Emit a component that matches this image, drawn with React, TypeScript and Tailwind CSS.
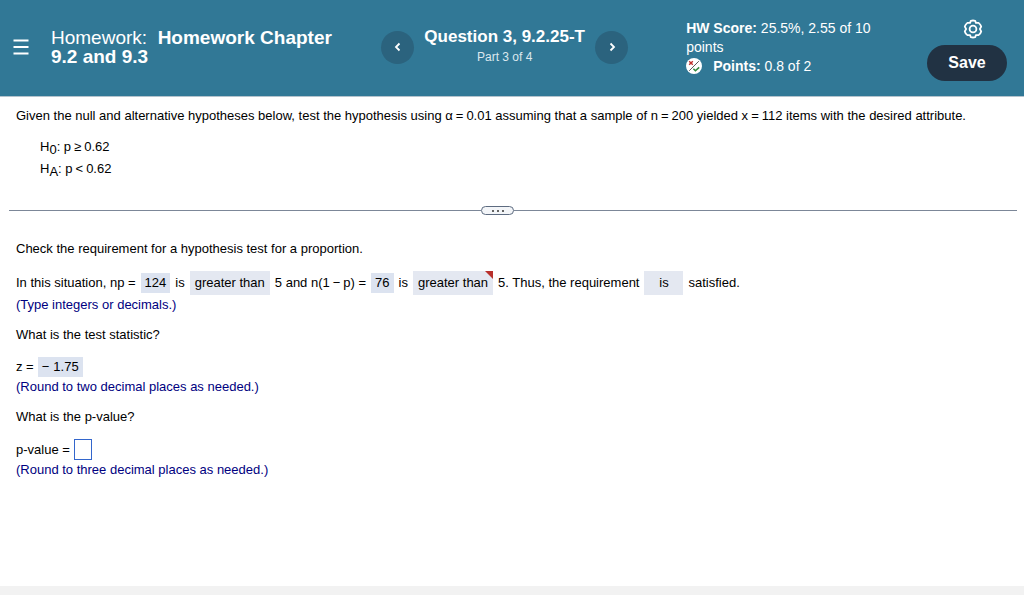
import React, { useState } from "react";

interface AnswerProps {
  children: React.ReactNode;
  flagged?: boolean;
}

// submitted numeric answer
function NumberAnswer({ children }: AnswerProps) {
  return (
    <span className="flex h-5 items-center bg-[#dce3f0] px-1">{children}</span>
  );
}

// submitted drop-down answer, flagged when it was marked wrong
function ChoiceAnswer({ children, flagged = false }: AnswerProps) {
  return (
    <span className="relative flex h-6 min-w-[39px] items-center justify-center bg-[#e4e8f1] px-[5px]">
      {children}
      {flagged && (
        <svg className="absolute top-0 right-0 h-2 w-2" viewBox="0 0 8 8" aria-hidden="true">
          <path d="M0 0H8V8Z" fill="#b8302c" />
        </svg>
      )}
    </span>
  );
}

function Op({ children }: { children: React.ReactNode }) {
  return <span className="mx-[3px]">{children}</span>;
}

function Sub({ children }: { children: React.ReactNode }) {
  return <sub className="text-[13px]">{children}</sub>;
}

function Hint({ children }: { children: React.ReactNode }) {
  return <p className="text-[#000080]">{children}</p>;
}

function PartialIcon() {
  return (
    <svg className="h-4 w-4" viewBox="0 0 16 16" fill="none" aria-hidden="true">
      <circle cx="8" cy="8" r="8" fill="#fff" />
      <path d="M3.2 3.2L6.8 6.8M6.8 3.2L3.2 6.8" stroke="#c0302c" strokeWidth="1.4" />
      <path d="M12.8 3.2L3.2 12.8" stroke="#444" strokeWidth="0.9" />
      <path d="M7.4 10.8L9.4 12.8L13.2 9.4" stroke="#2f8a3c" strokeWidth="1.5" />
    </svg>
  );
}

function GearIcon() {
  return (
    <svg className="h-5 w-5" viewBox="0 0 20 20" fill="none" stroke="#fff" strokeWidth="1.8" strokeLinejoin="round" aria-hidden="true">
      <path d="M7.8 1.8Q10 1.2 12.2 1.8L12.9 3.9L15.6 3.9Q17.6 5.4 18.2 7.6L16.9 10L18.2 12.4Q17.6 14.6 15.6 16.1L12.9 16.1L12.2 18.2Q10 18.8 7.8 18.2L7.1 16.1L4.4 16.1Q2.4 14.6 1.8 12.4L3.1 10L1.8 7.6Q2.4 5.4 4.4 3.9L7.1 3.9Z" />
      <circle cx="10" cy="10" r="3.4" />
    </svg>
  );
}

function Chevron({ d }: { d: string }) {
  return (
    <svg className="h-3 w-3" viewBox="0 0 12 12" fill="none" stroke="#fff" strokeWidth="1.8" aria-hidden="true">
      <path d={d} />
    </svg>
  );
}

function Header() {
  return (
    <header className="flex h-[97px] items-center border-b border-[#b4c3cd] bg-[#317896] pr-[17px] pb-0.5 text-white">
      <button type="button" aria-label="Menu" className="w-[51px] shrink-0 pl-[13px]">
        <svg className="h-4 w-4" viewBox="0 0 16 16" stroke="#fff" strokeWidth="1.8" aria-hidden="true">
          <path d="M0.5 1.5H15.5M0.5 8H15.5M0.5 14.5H15.5" />
        </svg>
      </button>

      <h1 className="flex-[11] pr-8 text-[19px] leading-[19px]">
        Homework:&nbsp; <strong>Homework Chapter 9.2 and 9.3</strong>
      </h1>

      <nav aria-label="Questions" className="flex w-[247px] shrink-0 items-center justify-between">
        <button type="button" aria-label="Previous question" className="flex h-[33px] w-[33px] items-center justify-center rounded-full bg-[#2b637e]">
          <Chevron d="M7.5 2.5L4 6L7.5 9.5" />
        </button>
        <div className="text-center">
          <h2 className="text-[17px] leading-5 font-bold whitespace-nowrap">Question 3, 9.2.25-T</h2>
          <p className="text-xs leading-5 text-[#dce8ee]">Part 3 of 4</p>
        </div>
        <button type="button" aria-label="Next question" className="flex h-[33px] w-[33px] items-center justify-center rounded-full bg-[#2b637e]">
          <Chevron d="M4.5 2.5L8 6L4.5 9.5" />
        </button>
      </nav>

      <div className="ml-[58px] flex-[8] pr-6 text-sm leading-[19px]">
        <p>
          <strong>HW Score:</strong> 25.5%, 2.55 of 10 points
        </p>
        <p className="flex items-center gap-[11px]">
          <PartialIcon />
          <span>
            <strong>Points:</strong> 0.8 of 2
          </span>
        </p>
      </div>

      <div className="flex w-20 shrink-0 flex-col items-center gap-1.5 pt-[5px]">
        <button type="button" aria-label="Settings" className="ml-3">
          <GearIcon />
        </button>
        <button type="button" className="h-9 w-full rounded-full bg-[#213243] text-base font-bold">
          Save
        </button>
      </div>
    </header>
  );
}

export default function App() {
  const [pValue, setPValue] = useState("");

  return (
    <div className="flex min-h-screen flex-col bg-white font-['Liberation_Sans',Arial,sans-serif] text-[13px] leading-5 text-black">
      <Header />

      <main className="flex-1">
        {/* problem statement */}
        <section className="px-4 pt-[9px]">
          <p>
            Given the null and alternative hypotheses below, test the hypothesis using α<Op>=</Op>0.01 assuming that a
            sample of n<Op>=</Op>200 yielded x<Op>=</Op>112 items with the desired attribute.
          </p>
          <div className="mt-2.5 pl-6 leading-[22px]">
            <p>
              H<Sub>0</Sub>: p<Op>≥</Op>0.62
            </p>
            <p>
              H<Sub>A</Sub>: p<Op>&lt;</Op>0.62
            </p>
          </div>
        </section>

        {/* divider */}
        <div className="mt-[26px] mr-[7px] ml-[9px] flex items-center">
          <div className="h-px flex-[47] bg-[#7c8798]" />
          <button type="button" aria-label="Resize panels" className="flex h-[9px] w-[33px] items-center justify-center gap-[3px] rounded-full border border-[#5d6b80] bg-[#f3f5f8]">
            <span className="h-0.5 w-0.5 rounded-full bg-[#333]" />
            <span className="h-0.5 w-0.5 rounded-full bg-[#333]" />
            <span className="h-0.5 w-0.5 rounded-full bg-[#333]" />
          </button>
          <div className="h-px flex-[50] bg-[#7c8798]" />
        </div>

        {/* answer area */}
        <section className="px-4 pt-6">
          <p>Check the requirement for a hypothesis test for a proportion.</p>
          <div className="mt-3 flex flex-wrap items-center gap-x-[5px]">
            <span>In this situation, np =</span>
            <NumberAnswer>124</NumberAnswer>
            <span>is</span>
            <ChoiceAnswer>greater than</ChoiceAnswer>
            <span>5 and n(1<Op>−</Op>p) =</span>
            <NumberAnswer>76</NumberAnswer>
            <span>is</span>
            <ChoiceAnswer flagged>greater than</ChoiceAnswer>
            <span>5. Thus, the requirement</span>
            <ChoiceAnswer>is</ChoiceAnswer>
            <span>satisfied.</span>
          </div>
          <Hint>(Type integers or decimals.)</Hint>

          <p className="mt-2.5">What is the test statistic?</p>
          <div className="mt-3 flex items-center gap-1">
            <span>z =</span>
            <NumberAnswer>−<span className="ml-1">1.75</span></NumberAnswer>
          </div>
          <Hint>(Round to two decimal places as needed.)</Hint>

          <p className="mt-2.5">What is the p-value?</p>
          <div className="mt-3 flex items-center gap-1">
            <label htmlFor="p-value">p-value =</label>
            <input
              id="p-value"
              type="text"
              value={pValue}
              onChange={(e) => setPValue(e.target.value)}
              className="h-[21px] w-[18px] border border-[#3366cc] bg-white outline-none"
            />
          </div>
          <Hint>(Round to three decimal places as needed.)</Hint>
        </section>
      </main>

      <footer className="h-[9px] bg-[#f2f2f2]" />
    </div>
  );
}
